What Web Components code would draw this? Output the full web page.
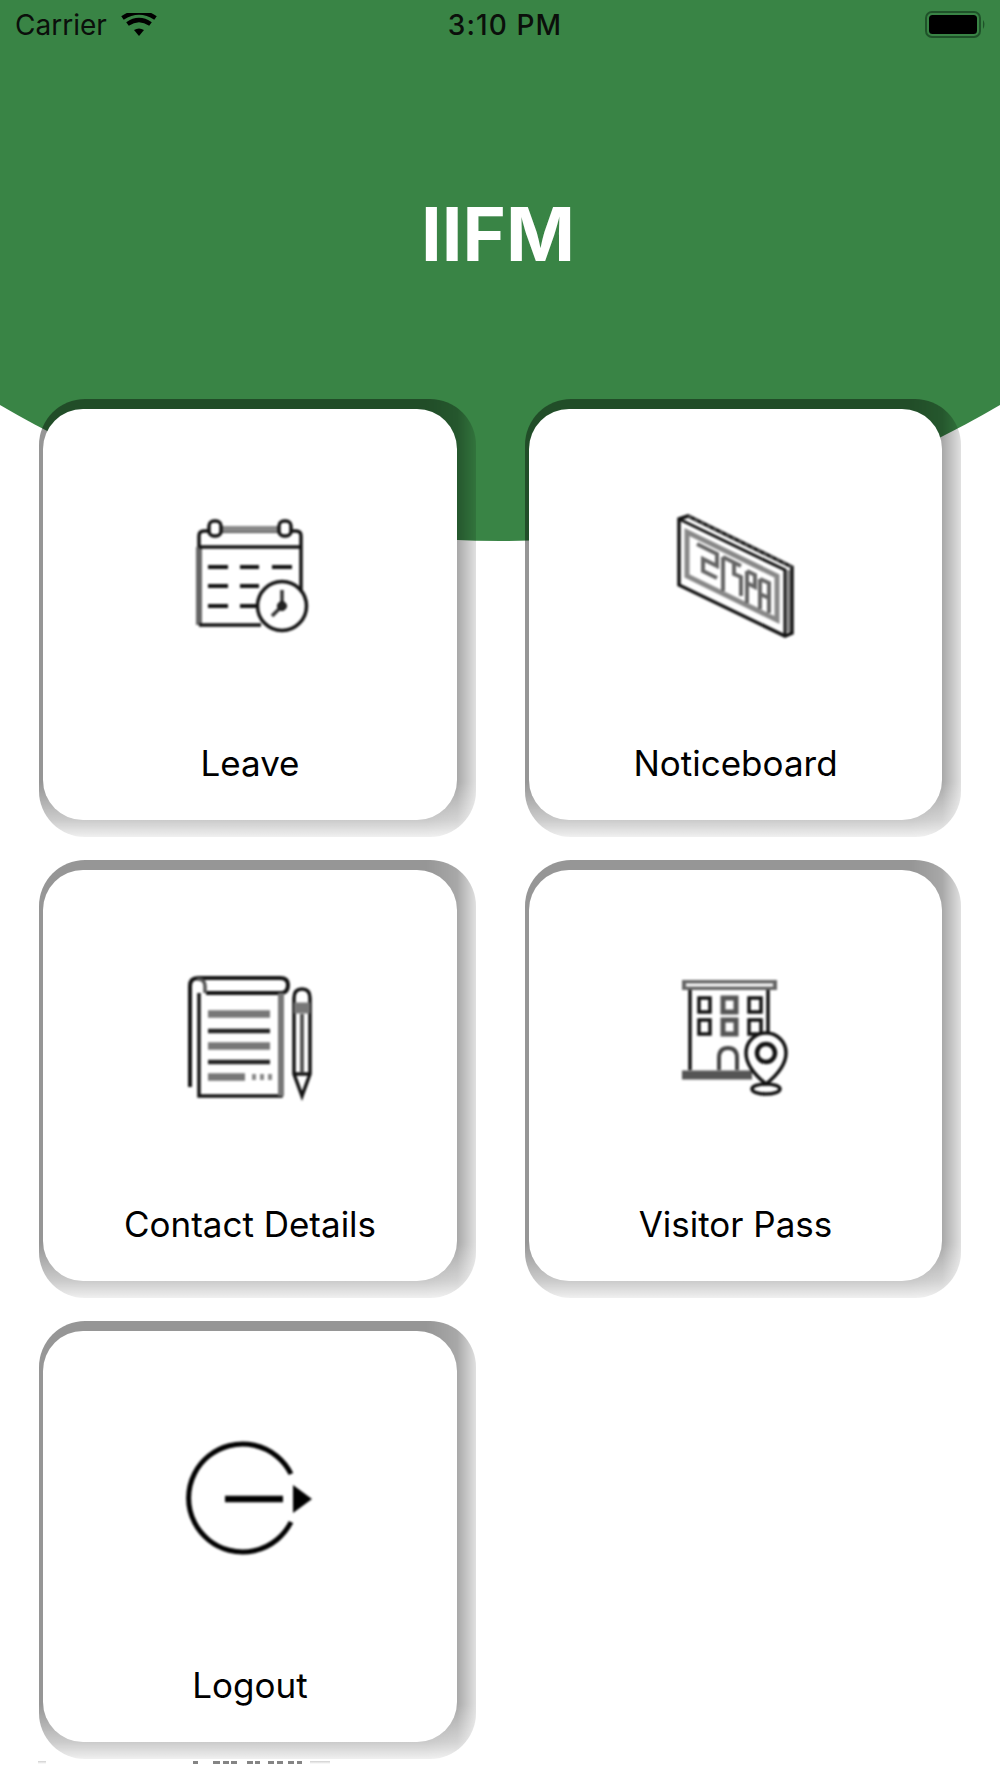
<!DOCTYPE html>
<html>
<head>
<meta charset="utf-8">
<title>IIFM</title>
<style>
html, body { margin: 0; background: #fff; }
body { width: 1000px; height: 1778px; overflow: hidden; font-family: Inter, "Liberation Sans", sans-serif; }
</style>
</head>
<body>

<app-header title-text="IIFM">
  <status-bar carrier="Carrier" time="3:10 PM"></status-bar>
</app-header>

<menu-grid>
  <menu-card>
    <svg slot="icon" width="160" height="150" viewBox="0 0 160 150" fill="none" stroke="#111">
      <path d="M29 125V36q0-5 5-5h92q5 0 5 5v70" stroke-width="3.500"/>
      <path d="M29 47v78" stroke="#666" stroke-width="6"/>
      <path d="M52 29h56" stroke="#888" stroke-width="6"/>
      <path d="M29 47h102" stroke-width="3.500"/>
      <path d="M29 125h62" stroke-width="3.500"/>
      <rect x="39" y="21" width="12" height="15" rx="5" fill="#fff" stroke-width="3.500"/>
      <rect x="109" y="21" width="12" height="15" rx="5" fill="#fff" stroke-width="3.500"/>
      <path d="M38 67h20M70 67h19M102 67h20M38 86h20M70 86h19M38 106h20M70 106h19" stroke-width="4"/>
      <circle cx="112" cy="106" r="24.500" fill="#fff" stroke-width="3.500"/>
      <path d="M112 90v16l-10 10" stroke="#333" stroke-width="3.500"/>
      <circle cx="112" cy="106" r="4.500" fill="#222"/>
    </svg>
    Leave
  </menu-card>

  <menu-card>
    <svg slot="icon" width="150" height="150" viewBox="1 0 150 150" fill="none" stroke="#111">
      <path d="M19 19l9-3 104 51v66l-7 3L19 85z" fill="#fff" stroke-width="3.500"/>
      <path d="M19 19l106 51v66" stroke-width="3"/>
      <path d="M28 16l104 51" stroke="#444" stroke-width="3" stroke-dasharray="4 3"/>
      <path d="M128 70v62" stroke="#888" stroke-width="4"/>
      <path d="M27 32l90 44v44L27 76z" stroke="#888" stroke-width="5"/>
      <path d="M37 44l20 10v12l-14-7v12l14 7M63 57l18 9M63 57v34M74 62v12l7 3v19M87 71v32M87 71l8 4v12l-8-4M100 79v30M100 79l9 4v30M100 94l9 4"
        stroke="#666" stroke-width="4"/>
    </svg>
    Noticeboard
  </menu-card>

  <menu-card>
    <svg slot="icon" width="160" height="150" viewBox="0 1 160 150" fill="none" stroke="#111">
      <path d="M20 127V26q0-8 8-8h82q8 0 8 7 0 7-6 8H36" stroke-width="4"/>
      <path d="M27 19q8 0 8 7v7" stroke="#555" stroke-width="3.500"/>
      <path d="M29 33v103h82V33" stroke-width="3.500"/>
      <path d="M111 33v103" stroke="#777" stroke-width="6"/>
      <path d="M38 54h62M38 86h62M38 117h37" stroke="#777" stroke-width="7.500"/>
      <path d="M38 71h62M38 102h62" stroke="#222" stroke-width="4.500"/>
      <path d="M82 117h4M90 117h4M98 117h4" stroke="#888" stroke-width="6"/>
      <path d="M124 114V38q0-9 8-9t8 9v76l-8 22z" stroke-width="3.500"/>
      <path d="M124 48h16" stroke="#777" stroke-width="11"/>
      <path d="M132 54v58" stroke="#555" stroke-width="4"/>
      <path d="M124 114h16" stroke-width="3.500"/>
    </svg>
    Contact Details
  </menu-card>

  <menu-card>
    <svg slot="icon" width="150" height="150" viewBox="1 1 150 150" fill="none" stroke="#111">
      <path d="M22 25h95" stroke="#666" stroke-width="10"/>
      <path d="M26 25h87" stroke="#fff" stroke-width="3"/>
      <path d="M30 30v80M108 30v42" stroke-width="3.500"/>
      <rect x="39" y="38" width="11" height="14" stroke-width="3.500"/>
      <rect x="63" y="38" width="13" height="14" stroke="#555" stroke-width="5"/>
      <rect x="89" y="38" width="12" height="14" stroke-width="3.500"/>
      <rect x="39" y="60" width="11" height="14" stroke-width="3.500"/>
      <rect x="63" y="60" width="13" height="14" stroke="#555" stroke-width="5"/>
      <rect x="89" y="60" width="12" height="14" stroke-width="3.500"/>
      <path d="M59 110V98q0-10 9-10t9 10v12" stroke="#444" stroke-width="4"/>
      <path d="M22 115h70" stroke="#555" stroke-width="9"/>
      <path d="M106 124q-20-16-20-31a20 20 0 0 1 40 0q0 15-20 31z" fill="#fff" stroke-width="3.500"/>
      <circle cx="106" cy="93" r="9" stroke-width="4.500"/>
      <ellipse cx="106" cy="129" rx="14" ry="5" stroke-width="3.500"/>
    </svg>
    Visitor Pass
  </menu-card>

  <menu-card>
    <svg slot="icon" width="160" height="150" viewBox="0 2 160 150" fill="none" stroke="#000">
      <path d="M121 54a54 54 0 1 0 0 48" stroke-width="5"/>
      <path d="M55 79h58" stroke-width="6.500"/>
      <path d="M123 65l19 14-19 14z" fill="#000" stroke="none"/>
    </svg>
    Logout
  </menu-card>
</menu-grid>

<page-sliver></page-sliver>

<script>
class StatusBar extends HTMLElement {

    constructor() {
        super();
        this.shadowDOM = this.attachShadow({mode: "open"});
    }

    connectedCallback(){
        this.render();
    }

    render() {
        this.shadowDOM.innerHTML = `
        <style>
        :host {
            display: grid;
            grid-template-columns: 1fr auto 1fr;
            align-items: center;
            height: 44px;
            padding: 3px 13px 0 15px;
            color: #0b0f0b;
            font: 400 28px/1 Inter, "Liberation Sans", sans-serif;
        }
        .left { display: flex; align-items: center; gap: 14px; }
        .time { letter-spacing: 1.1px; font-weight: 500; margin-left: 8px; }
        .right { display: flex; justify-content: flex-end; margin-top: -2px; }
        svg { display: block; }
        </style>
        <div class="left">
            <span>${this.getAttribute("carrier")}</span>
            <svg width="36" height="24" viewBox="0 0 36 24">
                <path d="M18 23l-5-6q5-3 10 0z" fill="#000"/>
                <path d="M6.5 11q11.500-8 23 0M1.500 5q16.500-11 33 0" fill="none" stroke="#000" stroke-width="4.500"/>
            </svg>
        </div>
        <span class="time">${this.getAttribute("time")}</span>
        <div class="right">
            <svg width="62" height="27" viewBox="0 0 62 27">
                <rect x="1" y="1" width="54" height="25" rx="6" fill="none" stroke="#1f5229" stroke-width="2"/>
                <rect x="4" y="4" width="48" height="19" rx="3.500" fill="#000"/>
                <path d="M58 9q3 4 0 9z" fill="#1f5229"/>
            </svg>
        </div>
        `;
    }
}

class AppHeader extends HTMLElement {

    constructor() {
        super();
        this.shadowDOM = this.attachShadow({mode: "open"});
    }

    connectedCallback(){
        this.render();
    }

    render() {
        this.shadowDOM.innerHTML = `
        <style>
        :host {
            display: block;
            height: 541px;
            background: #398445;
            clip-path: circle(987px at 500px -446px);
        }
        h1 {
            margin: 0;
            padding: 150px 4px 0 0;
            color: #fff;
            font: 700 74px/74px Inter, "Liberation Sans", sans-serif;
            text-align: center;
        }
        </style>
        <slot></slot>
        <h1>${this.getAttribute("title-text")}</h1>
        `;
    }
}

class MenuGrid extends HTMLElement {

    constructor() {
        super();
        this.shadowDOM = this.attachShadow({mode: "open"});
    }

    connectedCallback(){
        this.shadowDOM.innerHTML = `
        <style>
        :host {
            display: grid;
            grid-template-columns: 414px 413px;
            grid-auto-rows: 411px;
            column-gap: 72px;
            row-gap: 50px;
            padding-left: 43px;
            margin-top: -132px;
            position: relative;
        }
        </style>
        <slot></slot>
        `;
    }
}

class MenuCard extends HTMLElement {

    constructor() {
        super();
        this.shadowDOM = this.attachShadow({mode: "open"});
    }

    connectedCallback(){
        this.shadowDOM.innerHTML = `
        <style>
        :host {
            display: block;
            position: relative;
            color: #000;
            font: 400 35px/42px Inter, "Liberation Sans", sans-serif;
        }
        .shadow {
            position: absolute;
            inset: -10px -19px -17px -4px;
            border-radius: 46px;
            background:
                linear-gradient(to bottom, transparent calc(100% - 55px), rgba(255,255,255,.5) calc(100% - 17px), rgba(255,255,255,.86) 100%),
                linear-gradient(to right, rgba(0,0,0,.41) calc(100% - 50px), rgba(0,0,0,.34) calc(100% - 19px), rgba(0,0,0,.12) 100%);
        }
        .card {
            position: relative;
            height: 100%;
            box-sizing: border-box;
            display: flex;
            flex-direction: column;
            align-items: center;
            padding: 91px 0 36px;
            background: #fff;
            border-radius: 40px;
        }
        ::slotted(svg) {
            display: block;
            filter: blur(.8px);
        }
        .label { margin-top: auto; }
        </style>
        <div class="shadow"></div>
        <div class="card">
            <slot name="icon"></slot>
            <div class="label"><slot></slot></div>
        </div>
        `;
    }
}

class PageSliver extends HTMLElement {

    constructor() {
        super();
        this.shadowDOM = this.attachShadow({mode: "open"});
    }

    connectedCallback(){
        this.shadowDOM.innerHTML = `
        <style>
        :host {
            display: grid;
            grid-template-columns: 8px 109px 20px;
            justify-content: start;
            height: 5px;
            margin-top: 19px;
            padding-left: 38px;
            overflow: hidden;
        }
        .edge { background: linear-gradient(to bottom, #d0d0d0, #fff); height: 3px; }
        .ticks {
            margin-left: 147px;
            margin-right: -147px;
            height: 3px;
            opacity: .55;
            filter: blur(.5px);
            background: linear-gradient(90deg,
                #222 0 5px, transparent 5px 20px,
                #222 20px 27px, transparent 27px 30px,
                #222 30px 36px, transparent 36px 38px, #222 38px 44px, transparent 44px 54px,
                #222 54px 60px, transparent 60px 62px, #222 62px 67px, transparent 67px 75px,
                #222 75px 81px, transparent 81px 84px, #222 84px 90px, transparent 90px 95px,
                #222 95px 101px, transparent 101px 104px, #222 104px 109px);
        }
        .edge.far { margin-left: 155px; margin-right: -155px; }
        </style>
        <div class="edge"></div>
        <div class="ticks"></div>
        <div class="edge far"></div>
        `;
    }
}

customElements.define("status-bar", StatusBar);
customElements.define("app-header", AppHeader);
customElements.define("menu-grid", MenuGrid);
customElements.define("menu-card", MenuCard);
customElements.define("page-sliver", PageSliver);
</script>
</body>
</html>
